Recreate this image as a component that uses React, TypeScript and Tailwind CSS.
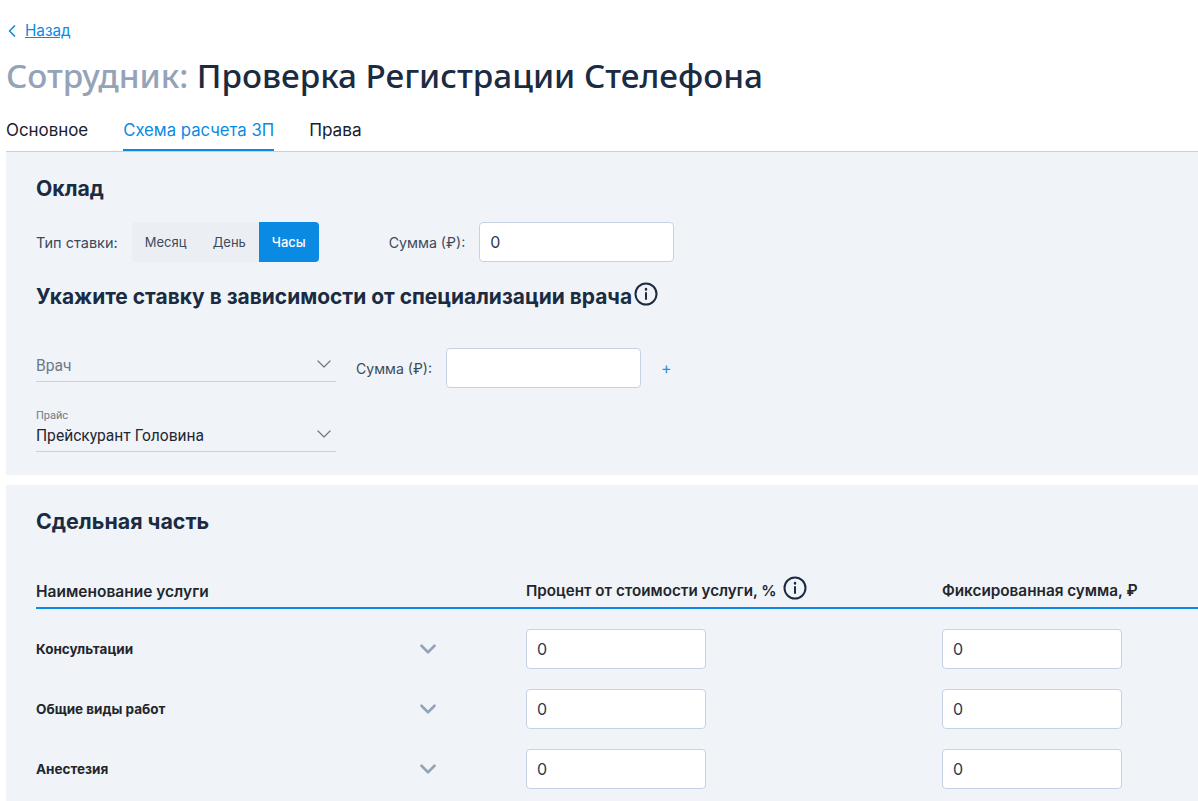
import { ChevronDown, ChevronLeft } from "lucide-react";

const services = ["Консультации", "Общие виды работ", "Анестезия"];

const InfoIcon = () => (
  <svg width="24" height="24" viewBox="0 0 24 24" fill="none" stroke="#1a2b42" strokeWidth="2" className="shrink-0">
    <circle cx="12" cy="12" r="10.5" />
    <path d="M12 11v6" strokeLinecap="round" />
    <path d="M12 7v.5" strokeLinecap="round" strokeWidth="2.4" />
  </svg>
);

const Field = ({ value, className }: { value: string; className: string }) => (
  <input
    readOnly
    value={value}
    className={`h-10 rounded border border-[#c5d2e4] bg-white pl-2.5 text-base text-[#2c3a4e] outline-none ${className}`}
  />
);

export default function App() {
  return (
    <div className="h-[801px] overflow-hidden bg-white pl-1.5 font-['Inter',sans-serif] text-[#1a2b42]">
      {/* Back link */}
      <div className="flex h-[62px] items-center text-[#0a8ae3]">
        <ChevronLeft size={20} strokeWidth={2} className="-ml-[4px] mr-[3px]" />
        <a href="#" className="text-[15.3px] underline">
          Назад
        </a>
      </div>

      <h1 className="-mt-[7px] h-[50px] whitespace-nowrap font-['Noto_Sans',sans-serif] text-[33.25px] leading-[40px] font-medium">
        <span className="text-[#94a3b8]">Сотрудник: </span>
        Проверка Регистрации Стелефона
      </h1>

      {/* Tabs */}
      <div className="flex h-[47px] items-stretch gap-[35px] border-b border-[#c5d2e4] pt-2 text-[16.7px]">
        <div className="flex items-center pb-[3px] text-[16.9px] text-[#16202e]">Основное</div>
        <div className="flex items-center border-b-2 border-[#0a8ae3] pb-px text-[#0a8ae3]">Схема расчета ЗП</div>
        <div className="flex items-center pb-[5px] text-[17.2px] text-[#16202e]">Права</div>
      </div>

      {/* Salary */}
      <section className="h-[323px] bg-[#f0f4f8] pl-[30px] pt-6">
        <h2 className="text-[21.2px] leading-6 font-bold">Оклад</h2>
        <div className="mt-[22px] flex h-10 items-center text-[14.2px]">
          <span className="pt-0.5 text-[14.5px] text-[#3c4a5e]">Тип ставки:</span>
          <div className="ml-[14px] flex h-10 overflow-hidden rounded bg-[#ebeff3] text-[13px]">
            <span className="flex w-[69px] items-center pl-[13px] pt-0.5 text-[#3c4a5e]">Месяц</span>
            <span className="flex w-[58px] items-center pl-3 pt-0.5 text-[#3c4a5e]">День</span>
            <span className="flex w-[60px] items-center justify-center bg-[#0a8ae3] pt-0.5 font-medium text-white">Часы</span>
          </div>
          <span className="ml-[70px] pt-0.5 text-[#3c4a5e]">Сумма (₽):</span>
          <Field value="0" className="ml-[14px] w-[195px]" />
        </div>
        <div className="mt-[23px] flex h-6 items-center gap-0.5">
          <h2 className="w-[596px] text-[20.95px] leading-6 font-bold whitespace-nowrap">
            Укажите ставку в зависимости от специализации врача
          </h2>
          <span className="-translate-y-[3px]">
            <InfoIcon />
          </span>
        </div>

        <div className="mt-[39px] flex h-10 items-start">
          <div className="relative h-[34px] w-[300px] border-b border-[#c5d2e4] pt-[6px] font-['Roboto',sans-serif] text-[15.7px] leading-6 text-[#6f7a89]">
            Врач
            <ChevronDown size={24} strokeWidth={1.25} className="absolute top-1 right-0 text-[#6f7a89]" />
          </div>
          <div className="flex h-10 items-center">
            <span className="ml-5 pt-0.5 text-[14.1px] text-[#3c4a5e]">Сумма (₽):</span>
            <Field value="" className="ml-[14px] w-[195px]" />
            <span className="ml-[20px] text-base text-[#2f8fd8]">+</span>
          </div>
        </div>

        <div className="relative mt-5 w-[300px] border-b border-[#c5d2e4] font-['Roboto',sans-serif]">
          <div className="text-[11px] leading-[16px] text-[#6f7a89]">Прайс</div>
          <div className="pb-[3px] text-[15.6px] leading-6 text-[#1f2733]">Прейскурант Головина</div>
          <ChevronDown size={24} strokeWidth={1.25} className="absolute top-[14px] right-0 text-[#6f7a89]" />
        </div>
      </section>

      {/* Piecework */}
      <section className="mt-[10px] h-[316px] bg-[#f0f4f8] pl-[30px] pt-6">
        <h2 className="text-[21.4px] leading-6 font-bold">Сдельная часть</h2>

        <div className="mt-[45px] flex h-[31px] items-end border-b-2 border-[#0a8ae3] pb-1 text-[15.3px] font-semibold text-[#22262c]">
          <div className="w-[490px] text-[15.5px]">Наименование услуги</div>
          <div className="relative flex w-[416px] items-center text-[15.2px]">
            Процент от стоимости услуги, %
            <span className="absolute -top-[4px] left-[257px]">
              <InfoIcon />
            </span>
          </div>
          <div>Фиксированная сумма, ₽</div>
        </div>

        <div className="flex flex-col gap-5 pt-5">
          {services.map((name) => (
            <div key={name} className="flex h-10 items-center">
              <div className="flex w-[490px] items-center text-[13.5px] font-bold text-[#22262c]">
                <span className="w-[379px]">{name}</span>
                <ChevronDown size={26} strokeWidth={2.4} className="text-[#94a3b8]" />
              </div>
              <Field value="0" className="w-[180px]" />
              <Field value="0" className="ml-[236px] w-[180px]" />
            </div>
          ))}
        </div>
      </section>
    </div>
  );
}
